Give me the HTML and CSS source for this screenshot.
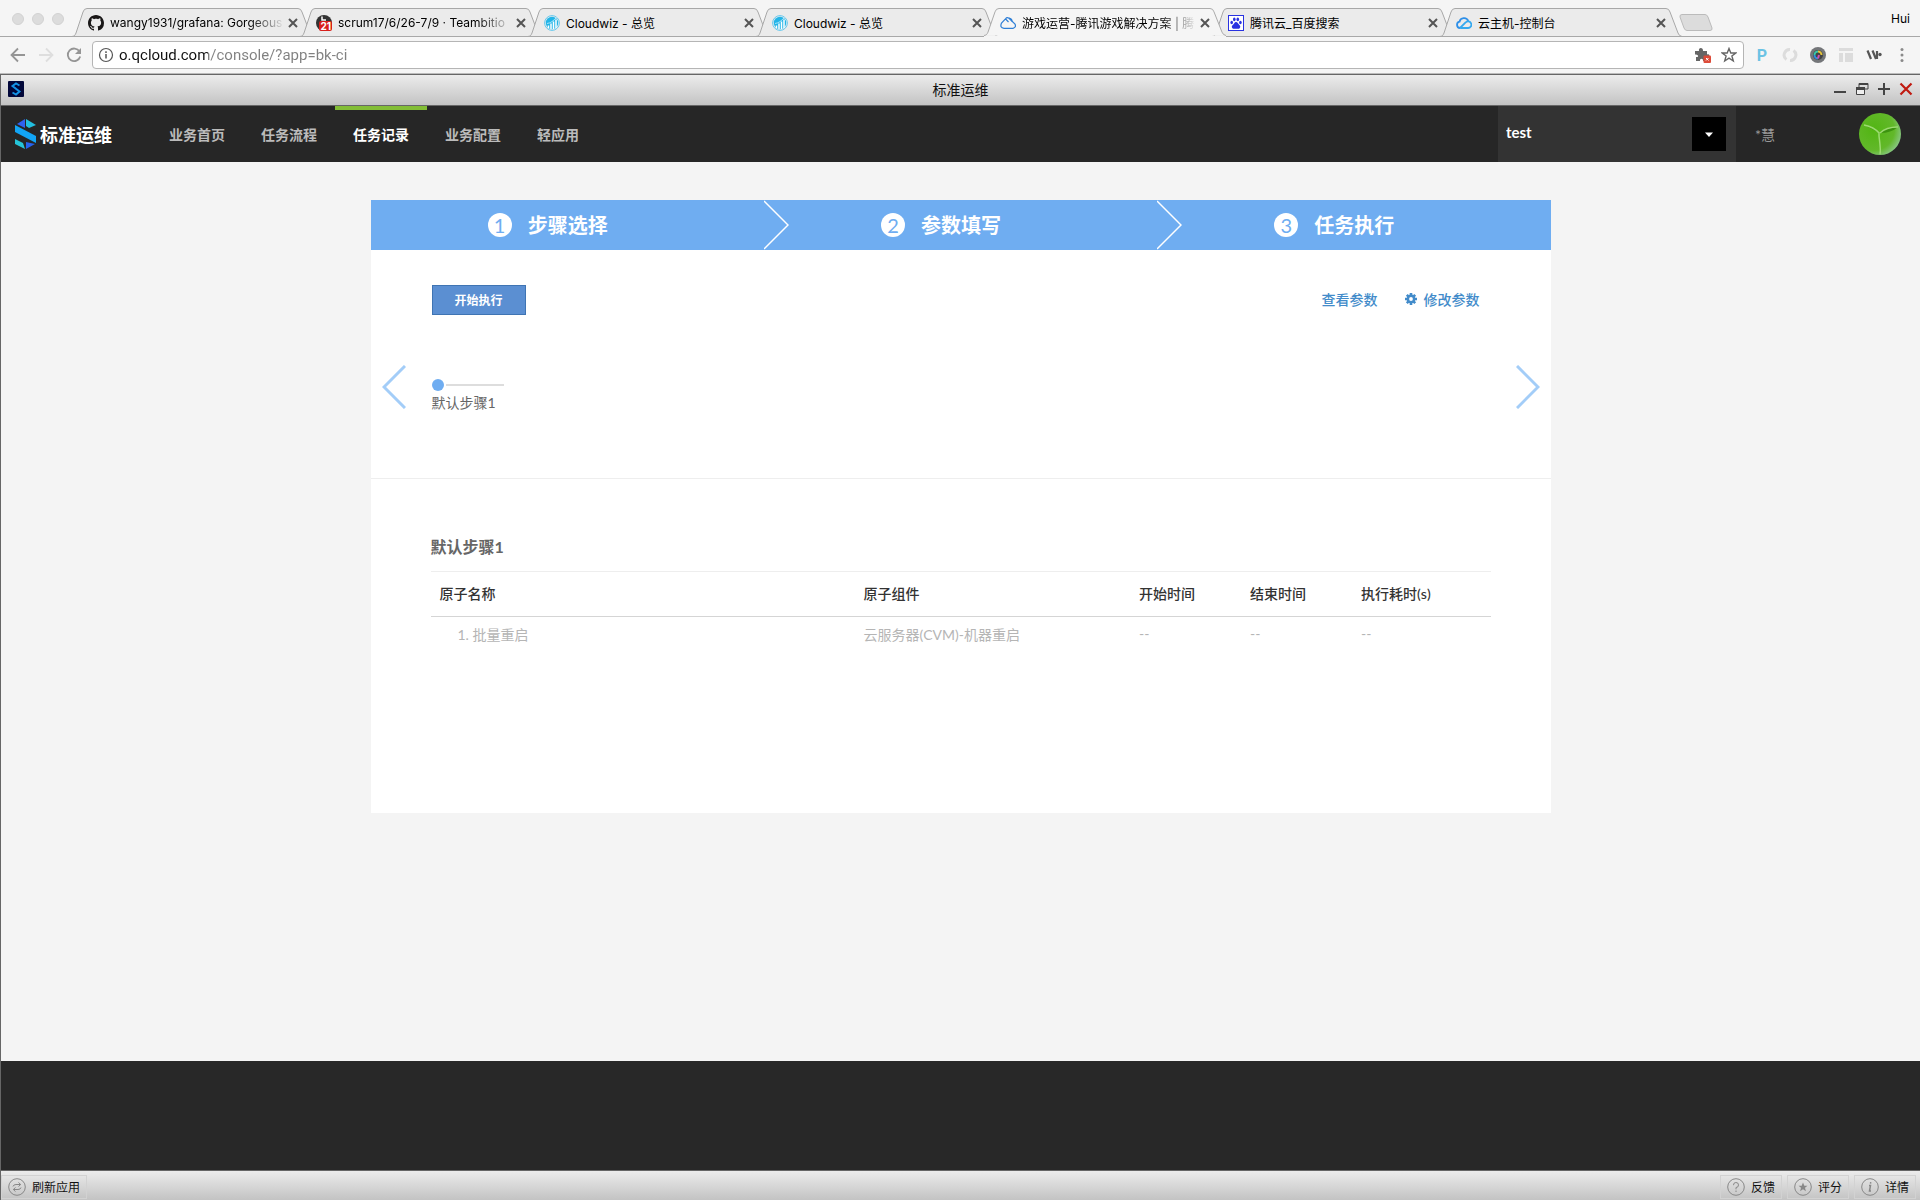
FILE: index.html
```html
<!DOCTYPE html>
<html lang="zh-CN">
<head>
  <meta charset="UTF-8">
  <title>标准运维</title>
  <link rel="stylesheet" href="styles.css">
</head>
<body>

  <svg class="defs" aria-hidden="true">
    <symbol id="tab-shape" viewBox="0 0 242 29" preserveAspectRatio="none">
      <path d="M0 28.500C3 28 3 27 4 25L11 4Q12 .5 15 .5H226Q229 .5 230 4L238 25Q239 28 242 28.500" stroke="#a8a8a8"/>
    </symbol>
    <symbol id="cloudwiz" viewBox="0 0 16 16">
      <circle cx="8" cy="8" r="7.400" fill="none" stroke="#63c8ee" stroke-width="1"/>
      <circle cx="8" cy="8" r="6.200" fill="#22b5e8"/>
      <path d="M4.500 13V10.500M7 14V8.500M9.500 14V6.500M12 13V4.500" stroke="#fff" stroke-width="1.500"/>
      <path d="M3 8.500C7 8 9 6 12.500 2.500" stroke="#c9effb" stroke-width=".8" fill="none"/>
    </symbol>
  </svg>

  <div class="tab-strip">
    <div class="lights"><i></i><i></i><i></i></div>
    <div class="tabs">
      <div class="tab">
        <svg class="tab-bg"><use href="#tab-shape"/></svg>
        <svg class="favicon" viewBox="0 0 16 16"><path fill="#191717" d="M8 0C3.580 0 0 3.580 0 8c0 3.540 2.290 6.530 5.470 7.590.4.070.55-.17.55-.38 0-.19-.01-.82-.01-1.490-2.010.37-2.530-.49-2.690-.94-.09-.23-.48-.94-.82-1.130-.28-.15-.68-.52-.01-.53.63-.01 1.080.58 1.230.82.72 1.210 1.870.87 2.330.66.070-.52.28-.87.51-1.070-1.780-.2-3.640-.89-3.640-3.950 0-.87.31-1.590.82-2.150-.08-.2-.36-1.020.08-2.120 0 0 .67-.21 2.200.82.64-.18 1.320-.27 2-.27s1.360.09 2 .27c1.530-1.040 2.200-.82 2.200-.82.44 1.100.16 1.920.08 2.120.51.56.82 1.270.82 2.150 0 3.070-1.870 3.750-3.650 3.950.29.25.54.73.54 1.480 0 1.070-.01 1.930-.01 2.200 0 .21.15.46.55.38A8.010 8.010 0 0 0 16 8c0-4.420-3.580-8-8-8z"/></svg>
        <span class="tab-title faded">wangy1931/grafana: Gorgeous</span>
        <button class="tab-close" aria-label="关闭标签页"><svg viewBox="0 0 10 10"><path d="M1 1L9 9M9 1L1 9"/></svg></button>
      </div>
      <div class="tab">
        <svg class="tab-bg"><use href="#tab-shape"/></svg>
        <span class="favicon badge-icon">
          <svg viewBox="0 0 16 16"><circle cx="8" cy="8" r="8" fill="#333"/><path d="M6 1.500V5H10" stroke="#fff" stroke-width="1.500" fill="none"/></svg>
          <b>21</b>
        </span>
        <span class="tab-title faded">scrum17/6/26-7/9 · Teambitio</span>
        <button class="tab-close" aria-label="关闭标签页"><svg viewBox="0 0 10 10"><path d="M1 1L9 9M9 1L1 9"/></svg></button>
      </div>
      <div class="tab">
        <svg class="tab-bg"><use href="#tab-shape"/></svg>
        <svg class="favicon"><use href="#cloudwiz"/></svg>
        <span class="tab-title">Cloudwiz - 总览</span>
        <button class="tab-close" aria-label="关闭标签页"><svg viewBox="0 0 10 10"><path d="M1 1L9 9M9 1L1 9"/></svg></button>
      </div>
      <div class="tab">
        <svg class="tab-bg"><use href="#tab-shape"/></svg>
        <svg class="favicon"><use href="#cloudwiz"/></svg>
        <span class="tab-title">Cloudwiz - 总览</span>
        <button class="tab-close" aria-label="关闭标签页"><svg viewBox="0 0 10 10"><path d="M1 1L9 9M9 1L1 9"/></svg></button>
      </div>
      <div class="tab active">
        <svg class="tab-bg"><use href="#tab-shape"/></svg>
        <svg class="favicon" viewBox="0 0 16 16" fill="none" stroke="#2f7fd6" stroke-width="1.200"><path d="M8.500 7L5.500 3.800 1.500 8Q-.5 13 4 13.300H13Q16.500 12.500 15 9L9 3.200Q7 1.800 5.500 3.800"/><path d="M9 3.200Q12 3.500 12 6.500"/></svg>
        <span class="tab-title faded">游戏运营-腾讯游戏解决方案 | 腾</span>
        <button class="tab-close" aria-label="关闭标签页"><svg viewBox="0 0 10 10"><path d="M1 1L9 9M9 1L1 9"/></svg></button>
      </div>
      <div class="tab">
        <svg class="tab-bg"><use href="#tab-shape"/></svg>
        <svg class="favicon" viewBox="0 0 16 16"><rect x=".5" y=".5" width="15" height="15" fill="#fff" stroke="#2932e1"/><g fill="#2932e1"><ellipse cx="3.700" cy="7.500" rx="1.300" ry="1.800"/><ellipse cx="6.300" cy="4.300" rx="1.300" ry="1.900"/><ellipse cx="9.800" cy="4.300" rx="1.300" ry="1.900"/><ellipse cx="12.400" cy="7.500" rx="1.300" ry="1.800"/><path d="M8 7C6.500 7 6 9 4.500 10.200S4.200 14 6.200 13.800 9 13.600 10.300 13.800 13.200 12 11.600 10.300 9.500 7 8 7Z"/></g></svg>
        <span class="tab-title">腾讯云_百度搜索</span>
        <button class="tab-close" aria-label="关闭标签页"><svg viewBox="0 0 10 10"><path d="M1 1L9 9M9 1L1 9"/></svg></button>
      </div>
      <div class="tab">
        <svg class="tab-bg"><use href="#tab-shape"/></svg>
        <svg class="favicon" viewBox="0 0 16 16" fill="none" stroke-width="1.800"><path d="M4 13A3.200 3.200 0 0 1 3.500 6.700 4.600 4.600 0 0 1 12.300 6" stroke="#2d8fe8"/><path d="M4 13H12A3.300 3.300 0 1 0 9.600 7.500L4 13" stroke="#35a9ef"/></svg>
        <span class="tab-title">云主机-控制台</span>
        <button class="tab-close" aria-label="关闭标签页"><svg viewBox="0 0 10 10"><path d="M1 1L9 9M9 1L1 9"/></svg></button>
      </div>
      <button class="new-tab" aria-label="新标签页"><svg viewBox="0 0 34 17"><path d="M3 .5H26Q28 .5 29 3L33 14Q33.500 16.500 31 16.500H8Q6 16.500 5 14L1 3Q.5 .5 3 .5Z" fill="#dcdcdc" stroke="#bbb"/></svg></button>
    </div>
    <span class="profile">Hui</span>
  </div>

  <div class="toolbar">
    <div class="nav-buttons">
      <button aria-label="后退"><svg viewBox="0 0 16 16"><path d="M15 8H2M8 1.500L1.500 8L8 14.500" stroke="#959595" stroke-width="1.800"/></svg></button>
      <button aria-label="前进"><svg viewBox="0 0 16 16"><path d="M1 8H14M8 1.500L14.500 8L8 14.500" stroke="#dedede" stroke-width="1.800"/></svg></button>
      <button aria-label="刷新"><svg viewBox="0 0 16 16"><path d="M13.500 4.500A6.300 6.300 0 1 0 14.200 9.500" stroke="#959595" stroke-width="1.800"/><path d="M15 1V7H9Z" fill="#959595"/></svg></button>
    </div>
    <div class="omnibox">
      <svg viewBox="0 0 16 16"><circle cx="8" cy="8" r="6.500" stroke="#555" stroke-width="1.200"/><path d="M8 7V11.500M8 4.300V5.900" stroke="#555" stroke-width="1.500"/></svg>
      <input type="text" aria-label="地址" value="o.qcloud.com/console/?app=bk-ci">
      <svg viewBox="0 0 16 16"><path fill="#666" d="M0 4H4C3 0 8.500 0 8 4H12V7.500C15 6.500 15.500 10.500 12 10V14H8C8.500 11 4.500 11 5 14H1V10C4 10.500 4 7.500 0 7.500Z"/><rect x="8.500" y="8.500" width="7.500" height="7.500" rx="1" fill="#dd4b39"/><path d="M11 11L13.500 13.500M13.500 11L11 13.500" stroke="#fff"/></svg>
      <svg class="star" viewBox="0 0 16 16"><path d="M8 1.500L9.800 6H14.800L10.900 9L12.300 14L8 11.200 3.700 14 5.100 9 1.200 6H6.200Z" stroke="#666" stroke-width="1.400"/></svg>
    </div>
    <div class="extensions">
      <b class="ext-p">P</b>
      <svg viewBox="0 0 16 16" stroke="#dcdcdc" stroke-width="3"><path d="M8 2.500A5.500 5.500 0 0 0 4.500 12.500M8 13.500A5.500 5.500 0 0 0 11.500 3.500"/></svg>
      <svg viewBox="0 0 16 16"><circle cx="8" cy="8" r="8" fill="#747679"/><circle cx="8" cy="8" r="5" fill="#444"/><path d="M4.500 8A3.500 3.500 0 0 1 8 4.500" stroke="#38c8a8" stroke-width="2"/><path d="M8 4.500A3.500 3.500 0 0 1 11.500 8" stroke="#e4c43c" stroke-width="2"/><path d="M4.500 8A3.500 3.500 0 0 0 8 11.500" stroke="#318fe0" stroke-width="2"/><path d="M8 11.500L9 8" stroke="#d34fb0" stroke-width="2"/></svg>
      <svg viewBox="0 0 16 16"><path fill="#dcdcdc" d="M1 1H15V4H1ZM1 6H5V15H1ZM7 6H15V15H7Z"/></svg>
      <svg viewBox="0 0 16 16"><path d="M1.500 3.500L5 12M6.500 3.500L10 12M11 4V12" stroke="#555" stroke-width="2.200"/><circle cx="14" cy="7.500" r="1.700" fill="#555"/></svg>
      <svg viewBox="0 0 16 16"><g fill="#8a8a8a"><circle cx="8" cy="2.500" r="1.500"/><circle cx="8" cy="8" r="1.500"/><circle cx="8" cy="13.500" r="1.500"/></g></svg>
    </div>
  </div>

  <div class="window">
    <div class="titlebar">
      <svg class="app-icon" viewBox="0 0 16 16"><rect width="16" height="16" rx="1" fill="#03083a"/><path d="M11.500 4.500L8 2.500 4.500 5 11.500 10.500 8 13.500 4.500 11.500" fill="none" stroke="#1593e6" stroke-width="2"/></svg>
      <span class="app-title">标准运维</span>
      <div class="window-controls">
        <button aria-label="最小化"><svg viewBox="0 0 14 14"><path d="M1 10H13" stroke="#444" stroke-width="2"/></svg></button>
        <button aria-label="还原"><svg viewBox="0 0 14 14"><path d="M4 5V1.500H13V7H10" stroke="#444" fill="none"/><path d="M4 2H13" stroke="#444" stroke-width="2"/><path d="M1.500 6.500H9.500V12.500H1.500Z" fill="#eee" stroke="#444"/><path d="M1 6.500H10" stroke="#444" stroke-width="3"/></svg></button>
        <button aria-label="最大化"><svg viewBox="0 0 14 14"><path d="M7 1V13M1 7H13" stroke="#444" stroke-width="2"/></svg></button>
        <button aria-label="关闭"><svg viewBox="0 0 14 14"><path d="M1.500 1.500L12.500 12.500M12.500 1.500L1.500 12.500" stroke="#c01a10" stroke-width="2.200"/></svg></button>
      </div>
    </div>

    <header class="header">
      <a class="logo" href="#">
        <svg viewBox="0 0 21 30"><path fill="#2f62f0" d="M10 0L2 5 10 9Z"/><path fill="#22bfe0" d="M11 0L21 6 14 9 11 7Z"/><path fill="#12a5f5" d="M0 6L21 17V24L0 13Z"/><path fill="#25c4d8" d="M0 20L8 24 10 30 0 25Z"/><path fill="#2563ee" d="M11 23L20 25 11 30Z"/></svg>
        <span>标准运维</span>
      </a>
      <nav class="menu">
        <a href="#">业务首页</a>
        <a href="#">任务流程</a>
        <a href="#" class="current">任务记录</a>
        <a href="#">业务配置</a>
        <a href="#">轻应用</a>
      </nav>
      <label class="biz">
        <select aria-label="业务"><option>test</option></select>
        <span class="biz-arrow"><svg viewBox="0 0 8 5"><path d="M0 .5H8L4 5Z" fill="#fff"/></svg></span>
      </label>
      <span class="user">*慧</span>
      <svg class="avatar" viewBox="0 0 42 42">
        <defs>
          <radialGradient id="leaf" cx="35%" cy="40%" r="70%"><stop offset="0" stop-color="#52b513"/><stop offset=".7" stop-color="#62b82a"/><stop offset="1" stop-color="#8cc98c"/></radialGradient>
        </defs>
        <circle cx="21" cy="21" r="21" fill="url(#leaf)"/>
        <path d="M5 12Q15 14 20 21 26 13 39 14 32 20 21 20" fill="#3c930f"/>
        <path d="M5 12Q15 14 20 20V23Q22 38 21 41M21 20Q27 14 39 14" fill="none" stroke="#9ddb72" stroke-width="1.500"/>
      </svg>
    </header>

    <main class="main">
      <section class="panel">
        <ol class="steps">
          <li><i>1</i>步骤选择<svg viewBox="0 0 25 50"><path d="M0 1L24 25L0 49"/></svg></li>
          <li><i>2</i>参数填写<svg viewBox="0 0 25 50"><path d="M0 1L24 25L0 49"/></svg></li>
          <li><i>3</i>任务执行</li>
        </ol>

        <div class="task">
          <div class="actions">
            <button class="start">开始执行</button>
            <div class="links">
              <a href="#">查看参数</a>
              <a href="#"><svg viewBox="0 0 12 12"><g stroke="#428bca" stroke-width="2.600"><path d="M6 0V12M0 6H12M1.800 1.800L10.200 10.200M10.200 1.800L1.800 10.200"/></g><circle cx="6" cy="6" r="4.400" fill="#428bca"/><circle cx="6" cy="6" r="1.900" fill="#fff"/></svg>修改参数</a>
            </div>
          </div>
          <div class="flow">
            <button class="arrow" aria-label="上一步"><svg viewBox="0 0 24 44"><path d="M23 1L2 22L23 43"/></svg></button>
            <div class="node">
              <div class="node-line"><i></i></div>
              <span>默认步骤1</span>
            </div>
            <button class="arrow" aria-label="下一步"><svg viewBox="0 0 24 44"><path d="M1 1L22 22L1 43"/></svg></button>
          </div>
        </div>

        <div class="detail">
          <h2>默认步骤1</h2>
          <table>
            <thead>
              <tr>
                <th class="col-name">原子名称</th>
                <th class="col-component">原子组件</th>
                <th class="col-time">开始时间</th>
                <th class="col-time">结束时间</th>
                <th>执行耗时(s)</th>
              </tr>
            </thead>
            <tbody>
              <tr>
                <td>1. 批量重启</td>
                <td>云服务器(CVM)-机器重启</td>
                <td>--</td>
                <td>--</td>
                <td>--</td>
              </tr>
            </tbody>
          </table>
        </div>
      </section>
    </main>

    <footer class="footer"></footer>

    <div class="statusbar">
      <button><svg viewBox="0 0 18 18"><circle cx="9" cy="9" r="8.300"/><path d="M5 8.500Q5.500 6.500 8 6.500H12.500M10.500 4.500L12.700 6.500 10.500 8.500M13 9.500Q12.500 11.500 10 11.500H5.500M7.500 9.500L5.300 11.500 7.500 13.500"/></svg>刷新应用</button>
      <div class="status-right">
        <button><svg viewBox="0 0 18 18"><circle cx="9" cy="9" r="8.300"/><path d="M6.500 7.200A2.500 2.500 0 1 1 9 9.500V11.300M9 12.500V14"/></svg>反馈</button>
        <button><svg viewBox="0 0 18 18"><circle cx="9" cy="9" r="8.300"/><path d="M9 4.500L10.300 7.700H13.500L11 9.800 11.900 13.200 9 11.300 6.100 13.200 7 9.800 4.500 7.700H7.700Z" fill="#888" stroke="none"/></svg>评分</button>
        <button><svg viewBox="0 0 18 18"><circle cx="9" cy="9" r="8.300"/><path d="M8 7.500H9.500L8.500 13H10M9.700 4.200L9.500 5.700" stroke-width="1.500"/></svg>详情</button>
      </div>
    </div>
  </div>

</body>
</html>
```

FILE: styles.css
```css
* {
  box-sizing: border-box;
}
body {
  margin: 0;
  min-height: 100vh;
  display: flex;
  flex-direction: column;
  background: #f5f5f5;
  font-family: Lato, "Noto Sans CJK SC", sans-serif;
  font-size: 14px;
}
button {
  padding: 0;
  border: 0;
  background: none;
  font-family: inherit;
  cursor: pointer;
}
a {
  text-decoration: none;
}
svg {
  flex: none;
  display: block;
}
.defs {
  position: absolute;
  width: 0;
  height: 0;
}

/* browser tabs */
.tab-strip {
  display: flex;
  align-items: flex-end;
  height: 37px;
  padding-right: 10px;
  border-bottom: 1px solid #a8a8a8;
  font-family: Inter, "Noto Sans CJK SC", sans-serif;
  font-size: 12px;
}
.lights {
  display: flex;
  gap: 8px;
  width: 72px;
  padding: 0 0 11px 12px;
}
.lights i {
  width: 12px;
  height: 12px;
  border: 1px solid #d2d2d2;
  border-radius: 50%;
  background: #dcdcdc;
}
.tabs {
  display: flex;
  flex: 1;
  min-width: 0;
  margin-bottom: -1px;
}
.tab {
  position: relative;
  display: flex;
  align-items: center;
  flex: 0 1 242px;
  min-width: 0;
  height: 29px;
  margin-right: -14px;
  padding: 0 13px 0 16px;
}
.tab.active {
  z-index: 1;
}
.tab-bg {
  position: absolute;
  top: 0;
  left: 0;
  z-index: -1;
  width: 100%;
  height: 29px;
  fill: #ebebeb;
}
.active .tab-bg {
  border-bottom: 1px solid #f5f5f5;
  fill: #f5f5f5;
}
.favicon {
  width: 16px;
  height: 16px;
  margin-right: 6px;
}
.badge-icon {
  position: relative;
  flex: none;
}
.badge-icon b {
  position: absolute;
  right: 0;
  bottom: 0;
  padding: 0 1px;
  border-radius: 2px;
  background: #d8201c;
  color: #fff;
  font-size: 10px;
  line-height: 10px;
}
.tab-title {
  flex: 1;
  overflow: hidden;
  white-space: nowrap;
}
.tab-title.faded {
  mask-image: linear-gradient(to right, #000 calc(100% - 36px), transparent);
}
.tab-close {
  width: 16px;
  padding: 3px;
}
.tab-close svg {
  width: 10px;
  height: 10px;
  stroke: #555;
  stroke-width: 2;
}
.new-tab {
  align-self: center;
  margin-left: 11px;
}
.new-tab svg {
  width: 34px;
  height: 17px;
}
.profile {
  align-self: center;
}

/* address bar */
.toolbar {
  display: flex;
  align-items: center;
  gap: 10px;
  height: 37px;
  padding: 0 10px;
  border-bottom: 1px solid #bbb;
}
.nav-buttons {
  display: flex;
  gap: 12px;
  width: 72px;
}
.toolbar svg {
  width: 16px;
  height: 16px;
  fill: none;
}
.omnibox {
  display: flex;
  flex: 1;
  align-items: center;
  gap: 5px;
  height: 28px;
  padding: 0 6px 0 5px;
  border: 1px solid #b5b5b5;
  border-radius: 4px;
  background: #fff;
}
.omnibox .star {
  margin-left: 5px;
}
.omnibox input {
  flex: 1;
  min-width: 0;
  padding: 0;
  border: 0;
  outline: 0;
  font-family: Roboto, sans-serif;
  font-size: 15px;
  line-height: 20px;
  /* host is black, the path after it grey */
  background: linear-gradient(to right, #111 89px, #808080 89px);
  background-clip: text;
  -webkit-text-fill-color: transparent;
}
.extensions {
  display: flex;
  align-items: center;
  gap: 12px;
}
.ext-p {
  width: 16px;
  color: #6cc3e4;
  font-family: Roboto, sans-serif;
  font-size: 16px;
  text-align: center;
}

/* app window */
.window {
  display: flex;
  flex: 1;
  flex-direction: column;
  border-top: 1px solid #666;
  border-left: 1px solid #666;
}
.titlebar {
  display: grid;
  grid-template-columns: 1fr auto 1fr;
  align-items: center;
  height: 31px;
  padding: 0 7px 2px;
  border-bottom: 1px solid #666;
  background: linear-gradient(#ececec, #c3c3c3);
  color: #111;
}
.app-icon {
  width: 16px;
  height: 16px;
}
.window-controls {
  display: flex;
  justify-content: flex-end;
  gap: 8px;
}
.window-controls svg {
  width: 14px;
  height: 14px;
}

.header {
  display: flex;
  align-items: center;
  height: 56px;
  padding-right: 19px;
  background: #262626;
}
.logo {
  display: flex;
  align-items: center;
  gap: 4px;
  width: 150px;
  padding-left: 14px;
  color: #fff;
  font-size: 18px;
  font-weight: bold;
}
.logo svg {
  width: 21px;
  height: 30px;
}
.menu {
  display: flex;
  flex: 1;
}
.menu a {
  height: 56px;
  padding: 0 18px;
  border-top: 4px solid transparent;
  color: #bbb;
  font-weight: bold;
  line-height: 50px;
}
.menu .current {
  border-color: #82bd35;
  color: #fff;
}
.biz {
  position: relative;
  width: 238px;
  height: 56px;
}
.biz select {
  width: 100%;
  height: 100%;
  padding: 0 56px 4px 8px;
  border: 0;
  border-radius: 0;
  background: #333;
  color: #fff;
  font-family: inherit;
  font-size: 15px;
  font-weight: bold;
  appearance: none;
}
.biz-arrow {
  position: absolute;
  top: 11px;
  right: 10px;
  display: flex;
  align-items: center;
  justify-content: center;
  width: 34px;
  height: 34px;
  background: #000;
  pointer-events: none;
}
.biz-arrow svg {
  width: 8px;
  height: 5px;
}
.user {
  width: 123px;
  padding-left: 19px;
  color: #999;
}
.avatar {
  width: 42px;
  height: 42px;
}

.main {
  flex: 1;
  padding: 38px 20px;
  background: #f4f4f4;
}
.panel {
  max-width: 1180px;
  min-height: 613px;
  margin: 0 auto;
  background: #fff;
}
.steps {
  display: flex;
  margin: 0;
  padding: 0;
  background: #6fadf1;
  color: #fff;
  font-size: 20px;
  font-weight: bold;
  list-style: none;
}
.steps li {
  position: relative;
  display: flex;
  flex: 1;
  align-items: center;
  justify-content: center;
  gap: 16px;
  height: 50px;
  padding: 0 39px 1px 0;
}
.steps i {
  width: 24px;
  height: 24px;
  border-radius: 50%;
  background: #fff;
  color: #6fadf1;
  font-style: normal;
  font-weight: normal;
  line-height: 24px;
  text-align: center;
}
.steps svg {
  position: absolute;
  top: 0;
  left: 100%;
  width: 25px;
  height: 50px;
  fill: none;
  stroke: #fff;
  stroke-width: 1.5;
}

.task {
  padding-top: 35px;
  border-bottom: 1px solid #eee;
}
.actions {
  display: flex;
  align-items: center;
  justify-content: space-between;
  padding: 0 71px 0 61px;
}
.start {
  width: 94px;
  height: 30px;
  padding-bottom: 2px;
  border: 1px solid #3f74b3;
  background: #5b8fd2;
  color: #fff;
  font-size: 12px;
  font-weight: bold;
}
.links {
  display: flex;
  gap: 27px;
  padding-bottom: 2px;
}
.links a {
  display: flex;
  align-items: center;
  gap: 7px;
  color: #428bca;
  font-weight: 500;
}
.links svg {
  width: 12px;
  height: 12px;
}
.flow {
  display: flex;
  align-items: center;
  gap: 26px;
  padding: 44px 11px 63px;
}
.arrow svg {
  width: 24px;
  height: 44px;
  fill: none;
  stroke: #a3cdf8;
  stroke-width: 3;
}
.node {
  flex: 1;
  padding-top: 20px;
  color: #666;
  line-height: 24px;
}
.node-line {
  display: flex;
  align-items: center;
  gap: 2px;
  width: 72px;
}
.node-line::after {
  content: "";
  flex: 1;
  height: 2px;
  background: #ddd;
}
.node-line i {
  width: 12px;
  height: 12px;
  border-radius: 50%;
  background: #6fadf1;
}

.detail {
  padding: 56px 60px;
}
h2 {
  margin: 0 0 12px;
  color: #666;
  font-size: 16px;
  line-height: 24px;
}
table {
  width: 100%;
  border-top: 1px solid #eee;
  border-collapse: collapse;
  table-layout: fixed;
}
th,
td {
  padding: 0 9px 2px;
  text-align: left;
}
th {
  height: 45px;
  border-bottom: 1px solid #d5d5d5;
  color: #333;
  font-weight: 500;
}
td {
  height: 36px;
  color: #b5b5b5;
}
td:first-child {
  padding-left: 27px;
}
.col-name {
  width: 40%;
}
.col-component {
  width: 26%;
}
.col-time {
  width: 111px;
}

.footer {
  height: 109px;
  background: #282828;
}
.statusbar {
  display: flex;
  justify-content: space-between;
  height: 30px;
  padding: 4px 4px 1px 0;
  border-top: 1px solid #666;
  background: linear-gradient(#ececec, #c3c3c3);
}
.status-right {
  display: flex;
  gap: 5px;
}
.statusbar button {
  display: flex;
  align-items: center;
  gap: 6px;
  padding: 0 6px 1px;
  border: 1px solid #d2d2d2;
  color: #111;
  font-size: 12px;
}
.statusbar svg {
  width: 18px;
  height: 18px;
  fill: none;
  stroke: #888;
}
```
